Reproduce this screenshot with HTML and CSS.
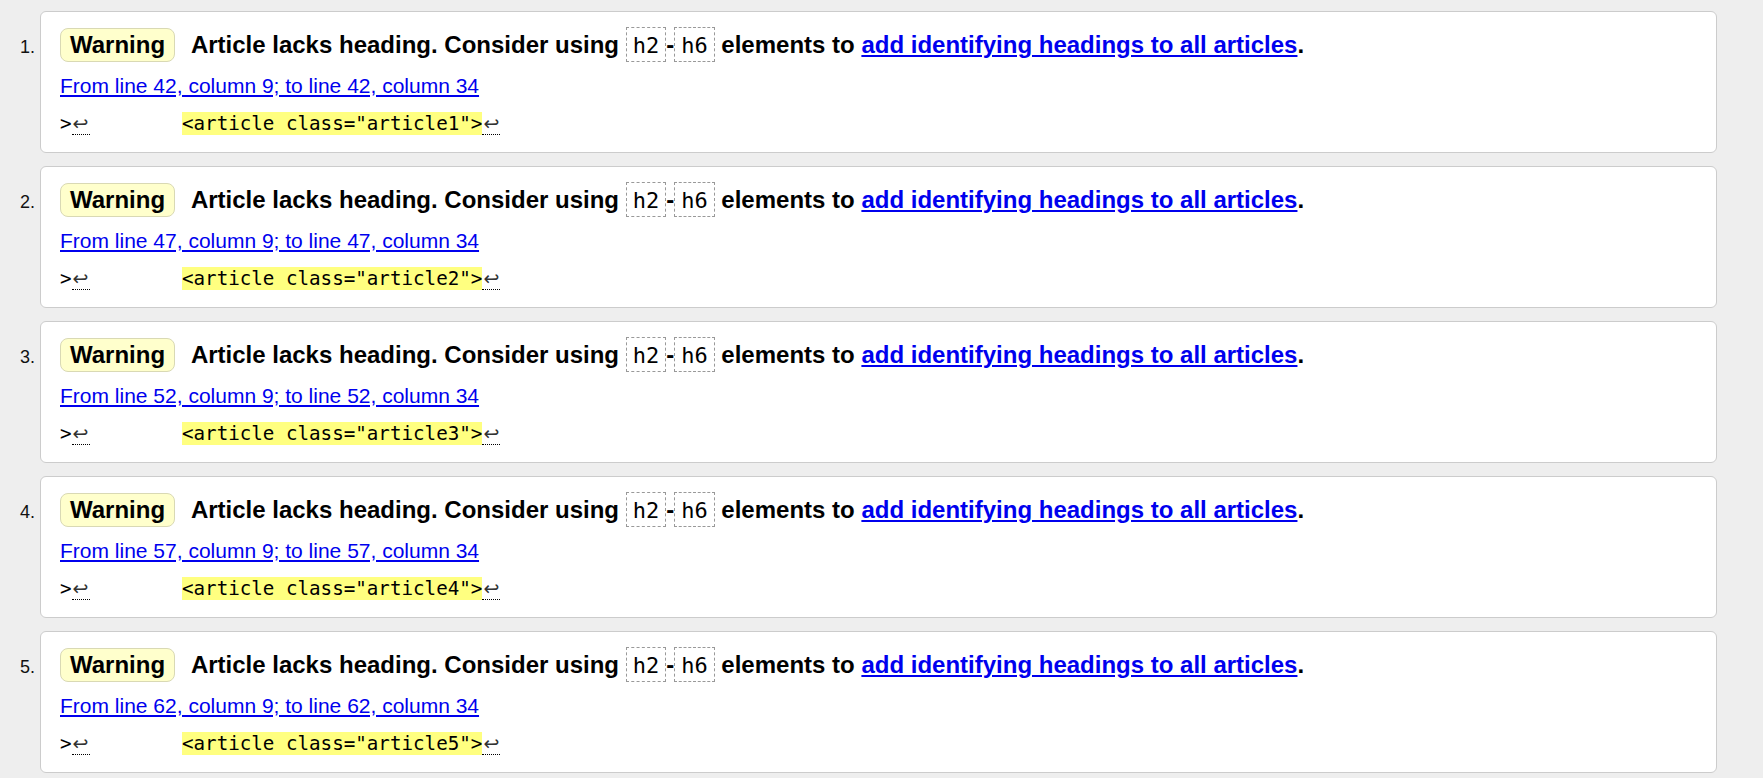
FILE: index.html
```html
<!DOCTYPE html>
<html lang="en">
<head>
<meta charset="utf-8">
<title>Nu Html Checker results</title>
<link rel="stylesheet" href="styles.css">
</head>
<body>
<ol class="messages">
  <li class="msg">
    <p class="head"><strong class="badge">Warning</strong> <span class="text">Article lacks heading. Consider using <code>h2</code>-<code>h6</code> elements to <a href="#">add identifying headings to all articles</a>.</span></p>
    <p class="loc"><a href="#">From line 42, column 9; to line 42, column 34</a></p>
    <p class="extract"><code>&gt;<span class="lf">↩</span>        <mark>&lt;article class="article1"&gt;</mark><span class="lf">↩</span></code></p>
  </li>
  <li class="msg">
    <p class="head"><strong class="badge">Warning</strong> <span class="text">Article lacks heading. Consider using <code>h2</code>-<code>h6</code> elements to <a href="#">add identifying headings to all articles</a>.</span></p>
    <p class="loc"><a href="#">From line 47, column 9; to line 47, column 34</a></p>
    <p class="extract"><code>&gt;<span class="lf">↩</span>        <mark>&lt;article class="article2"&gt;</mark><span class="lf">↩</span></code></p>
  </li>
  <li class="msg">
    <p class="head"><strong class="badge">Warning</strong> <span class="text">Article lacks heading. Consider using <code>h2</code>-<code>h6</code> elements to <a href="#">add identifying headings to all articles</a>.</span></p>
    <p class="loc"><a href="#">From line 52, column 9; to line 52, column 34</a></p>
    <p class="extract"><code>&gt;<span class="lf">↩</span>        <mark>&lt;article class="article3"&gt;</mark><span class="lf">↩</span></code></p>
  </li>
  <li class="msg">
    <p class="head"><strong class="badge">Warning</strong> <span class="text">Article lacks heading. Consider using <code>h2</code>-<code>h6</code> elements to <a href="#">add identifying headings to all articles</a>.</span></p>
    <p class="loc"><a href="#">From line 57, column 9; to line 57, column 34</a></p>
    <p class="extract"><code>&gt;<span class="lf">↩</span>        <mark>&lt;article class="article4"&gt;</mark><span class="lf">↩</span></code></p>
  </li>
  <li class="msg">
    <p class="head"><strong class="badge">Warning</strong> <span class="text">Article lacks heading. Consider using <code>h2</code>-<code>h6</code> elements to <a href="#">add identifying headings to all articles</a>.</span></p>
    <p class="loc"><a href="#">From line 62, column 9; to line 62, column 34</a></p>
    <p class="extract"><code>&gt;<span class="lf">↩</span>        <mark>&lt;article class="article5"&gt;</mark><span class="lf">↩</span></code></p>
  </li>
</ol>
</body>
</html>
```

FILE: styles.css
```css
html, body {
  margin: 0;
  padding: 0;
  background: #eeeeee;
}

body {
  font-family: "Liberation Sans", Arial, sans-serif;
  color: #000;
}

.messages {
  margin: 0;
  padding: 11px 46px 0 40px;
  list-style: decimal outside;
}

.msg {
  background: #ffffff;
  border: 1px solid #cccccc;
  border-radius: 6px;
  padding: 14px 19px 15px 19px;
  margin: 0 0 13px 0;
}

.msg::marker {
  font-size: 18px;
  color: #111;
}

.head {
  margin: 0;
  font-size: 24px;
  line-height: 38px;
  font-weight: bold;
  white-space: nowrap;
}

.badge {
  display: inline-block;
  line-height: 28px;
  padding: 2px 9px;
  border: 1px solid #d9d9b4;
  border-radius: 8px;
  background: #ffffcc;
  margin-right: 10px;
}

.head code {
  font-family: "DejaVu Sans Mono", "Liberation Mono", monospace;
  font-weight: normal;
  font-size: 22px;
  line-height: 1;
  padding: 5px 6px 3px;
  border: 1px dashed #999999;
}

.head a {
  color: #0000ee;
  text-decoration: underline;
}

.loc {
  margin: 9px 0 0 0;
  font-size: 21px;
  line-height: 26px;
}

.loc a {
  color: #0000ee;
  text-decoration: underline;
}

.extract {
  margin: 12px 0 0 0;
  font-family: "DejaVu Sans Mono", "Liberation Mono", monospace;
  font-size: 19.2px;
  line-height: 26px;
}

.extract code {
  font-family: inherit;
  font-size: inherit;
  white-space: pre;
}

.extract mark {
  background: #ffff80;
  color: #000;
}

.lf {
  display: inline-block;
  width: 18px;
  text-align: center;
  font-family: "DejaVu Sans", sans-serif;
  font-size: 19px;
  line-height: 22px;
  color: #333;
  border-bottom: 1px dotted #000;
}
```
